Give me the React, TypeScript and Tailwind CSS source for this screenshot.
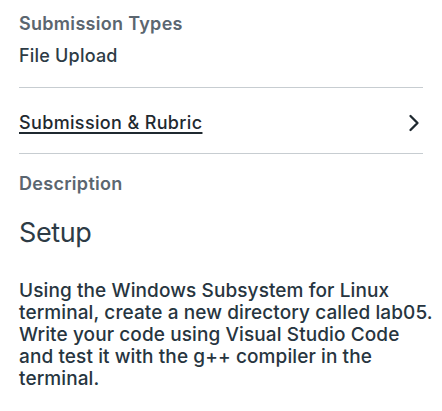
import { ChevronRight } from 'lucide-react'

export default function App() {
  return (
    <div className="w-[442px] h-[411px] overflow-hidden bg-white px-[19px] font-['Inter',sans-serif] text-[#2d3b45]">
      <div className="pt-[12px] pb-[19px]">
        <h3 className="text-[18px] leading-[24px] font-semibold tracking-[0.3px] text-[#5b6670]">Submission Types</h3>
        <p className="mt-[8px] text-[18px] leading-[24px] font-medium tracking-[0.2px]">File Upload</p>
      </div>
      <div className="h-px bg-[#c7cdd1]" />
      <button className="flex w-full items-center justify-between h-[65px] pt-[4px]">
        <span className="text-[18px] leading-[24px] font-medium tracking-[0.35px] underline underline-offset-[3px] decoration-[1.5px] text-[#1f2930]">
          Submission &amp; Rubric
        </span>
        <ChevronRight className="w-[28px] h-[28px] -mr-[5px] text-[#1f2930]" strokeWidth={2} />
      </button>
      <div className="h-px bg-[#c7cdd1]" />
      <div className="pt-[18px]">
        <h3 className="text-[18px] leading-[24px] font-semibold tracking-[0.3px] text-[#5b6670]">Description</h3>
        <h1 className="mt-[20px] text-[27px] leading-[34px] font-normal tracking-[-0.4px] text-[#2d3b45]">Setup</h1>
        <p className="mt-[30px] whitespace-nowrap text-[19px] leading-[22px] font-medium tracking-[0.1px] text-[#273540]">
          Using the Windows Subsystem for Linux
          <br />
          terminal, create a new directory called lab05.
          <br />
          Write your code using Visual Studio Code
          <br />
          and test it with the g++ compiler in the
          <br />
          terminal.
        </p>
      </div>
    </div>
  )
}
